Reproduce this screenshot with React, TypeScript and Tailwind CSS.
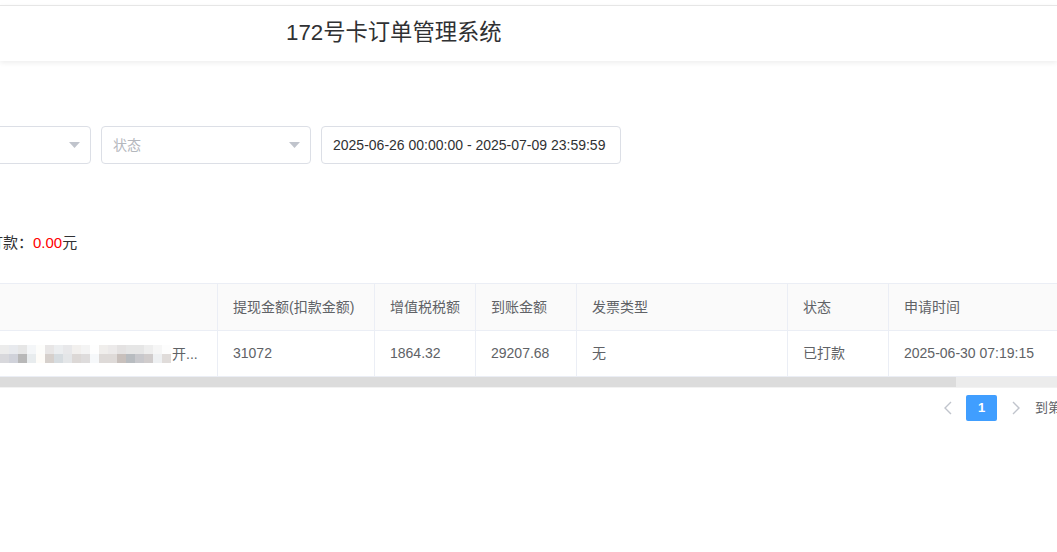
import React from "react";

const topRow = [
  "bg-[#ececec]", "bg-[#e8eaee]", "bg-[#e6e6e6]", "bg-[#f4f6f8]", "bg-[#fdfdfb]",
  "bg-[#e8e6e6]", "bg-[#eceef0]", "bg-[#e8e8ea]", "bg-[#f2f0ee]", "bg-[#f4f4f4]",
  "bg-[#fefefe]", "bg-[#f0eeec]", "bg-[#eceaea]", "bg-[#e4e2e2]", "bg-[#e6e6e6]",
  "bg-[#e6e6e6]", "bg-[#eeeeee]", "bg-[#f6f6f6]", "bg-[#fdfdfd]",
];
const bottomRow = [
  "bg-[#d8d8dc]", "bg-[#d0d2da]", "bg-[#b8b8b8]", "bg-[#e8ecee]", "bg-[#fefcf8]",
  "bg-[#d6d0cc]", "bg-[#d6dce0]", "bg-[#e4e6e8]", "bg-[#dcd8d6]", "bg-[#dedcdc]",
  "bg-[#f6f8fa]", "bg-[#dedad8]", "bg-[#dedad8]", "bg-[#c8c0bc]", "bg-[#b8bcc0]",
  "bg-[#c8c8cc]", "bg-[#d0cccc]", "bg-[#eef0f2]", "bg-[#e0dcda]",
];

function Caret() {
  return (
    <svg width="11" height="6" viewBox="0 0 11 6" className="shrink-0">
      <path d="M0 0 L11 0 L5.5 6 Z" fill="#c0c4cc" />
    </svg>
  );
}

const cols = "grid grid-cols-[217px_157px_101px_101px_211px_101px_1fr]";

export default function App() {
  const headers = ["提现金额(扣款金额)", "增值税税额", "到账金额", "发票类型", "状态", "申请时间"];
  const values = ["31072", "1864.32", "29207.68", "无", "已打款", "2025-06-30 07:19:15"];
  return (
    <div
      className="w-[1057px] h-[552px] overflow-hidden bg-white text-[14px] text-[#606266]"
      style={{ fontFamily: '"Liberation Sans", "Noto Sans CJK SC", Arial, sans-serif' }}
    >
      <div className="h-[5px]" />
      <div className="h-[56px] border-t border-[#e6e6e6] bg-white shadow-[0_2px_5px_rgba(0,0,0,0.07)] flex items-center pl-[286px]">
        <span className="text-[22.3px] text-[#303133] leading-none">172号卡订单管理系统</span>
      </div>

      {/* filters */}
      <div className="mt-[65px] flex gap-[10px] -ml-[119px]">
        <div className="w-[210px] h-[38px] border border-[#dcdfe6] rounded-[4px] flex items-center justify-end pr-[10px]">
          <Caret />
        </div>
        <div className="w-[210px] h-[38px] border border-[#dcdfe6] rounded-[4px] flex items-center justify-between pl-[11px] pr-[10px]">
          <span className="text-[#b4b7bd]">状态</span>
          <Caret />
        </div>
        <div className="w-[300px] h-[38px] border border-[#dcdfe6] rounded-[4px] flex items-center pl-[11px] text-[#303133] text-[14px]">
          2025-06-26 00:00:00 - 2025-07-09 23:59:59
        </div>
      </div>

      {/* summary */}
      <div className="mt-[69px] h-[20px] leading-[20px] flex text-[15px] text-[#303133] -ml-[27px] whitespace-nowrap">
        <span>已打款：</span>
        <span className="text-[#ff0000]">0.00</span>
        <span>元</span>
      </div>

      {/* table */}
      <div className="mt-[30px] border-t border-[#ebeef5]">
        <div className={`${cols} h-[47px] bg-[#fafafa] border-b border-[#ebeef5]`}>
          <div />
          {headers.map((h) => (
            <div key={h} className="border-l border-[#ebeef5] flex items-center pl-[15px] whitespace-nowrap">
              {h}
            </div>
          ))}
        </div>
        <div className={`${cols} h-[46px] border-b border-[#ebeef5]`}>
          <div className="flex items-center">
            <div className="flex flex-col">
              <div className="flex">
                {topRow.map((c, i) => (
                  <div key={i} className={`w-[9px] h-[9px] ${c}`} />
                ))}
              </div>
              <div className="flex">
                {bottomRow.map((c, i) => (
                  <div key={i} className={`w-[9px] h-[9px] ${c}`} />
                ))}
              </div>
            </div>
            <span className="ml-[1px] mt-[2px] whitespace-nowrap">开...</span>
          </div>
          {values.map((v, i) => (
            <div key={i} className="border-l border-[#ebeef5] flex items-center pl-[15px] whitespace-nowrap">
              {v}
            </div>
          ))}
        </div>
        <div className="h-[10px] bg-[#ececec] flex">
          <div className="w-[956px] h-full bg-[#dcdcdc]" />
        </div>
        <div className="h-[1px] bg-[#f2f2f2]" />
      </div>

      {/* pagination */}
      <div className="mt-[7px] flex items-center pl-[942px] whitespace-nowrap">
        <svg width="12" height="14" viewBox="0 0 12 14" className="shrink-0 mr-[12px]">
          <path d="M9 1 L3 7 L9 13" stroke="#c0c4cc" strokeWidth="1.4" fill="none" />
        </svg>
        <div className="shrink-0 w-[31px] h-[26px] bg-[#409eff] rounded-[2px] text-white text-[13px] font-bold flex items-center justify-center">
          1
        </div>
        <svg width="12" height="14" viewBox="0 0 12 14" className="shrink-0 ml-[13px]">
          <path d="M3 1 L9 7 L3 13" stroke="#c0c4cc" strokeWidth="1.4" fill="none" />
        </svg>
        <span className="ml-[13px] text-[13px] text-[#606266]">到第</span>
      </div>
    </div>
  );
}
